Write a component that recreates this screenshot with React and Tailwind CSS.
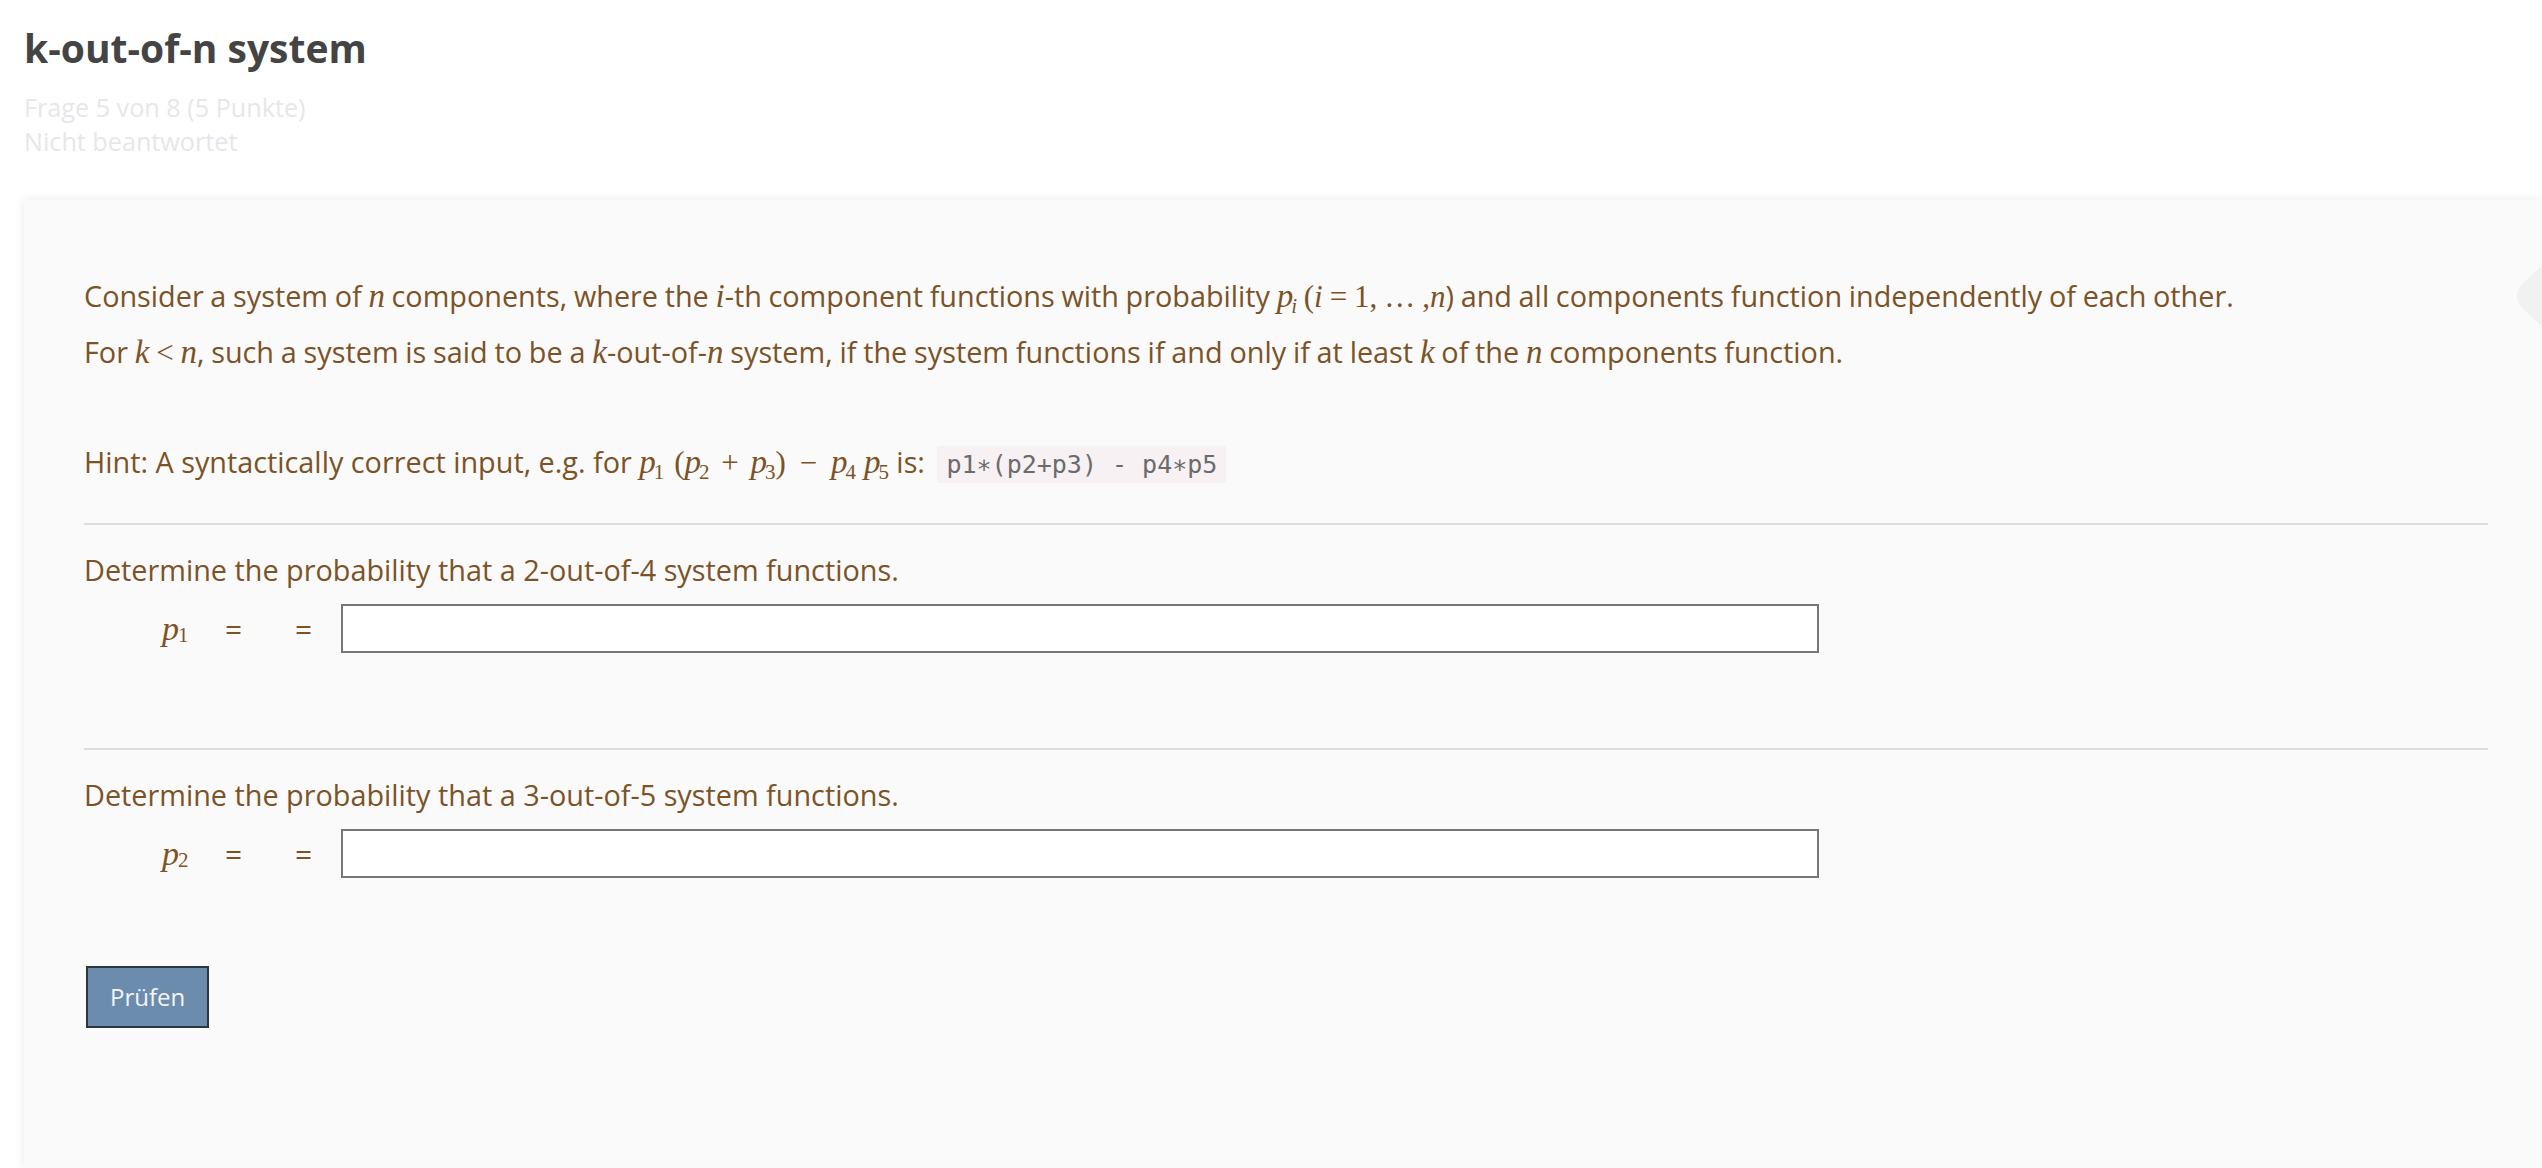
import React from "react";

const M = ({ children, className = "" }) => (
  <span className={"font-['Liberation_Serif',serif] italic text-[31px] leading-none " + className}>{children}</span>
);
const R = ({ children, className = "" }) => (
  <span className={"font-['Liberation_Serif',serif] text-[31px] leading-none " + className}>{children}</span>
);
const Sub = ({ children }) => (
  <span className="font-['Liberation_Serif',serif] not-italic text-[21px] leading-none relative top-[6px] -ml-[2px]">{children}</span>
);
const P = ({ i, className = "" }) => (
  <span className={"whitespace-nowrap " + className}>
    <M className="text-[33px]">p</M>
    <Sub>{i}</Sub>
  </span>
);

function Row({ idx }) {
  return (
    <div className="flex items-center ml-[78px] mt-[14px]">
      <div className="w-[63px] text-[#7b5327] flex items-center">
        <span className="font-['Liberation_Serif',serif] italic text-[34px] leading-none">p</span>
        <span className="font-['Liberation_Serif',serif] text-[21px] leading-none relative top-[7px] -ml-[1px]">{idx}</span>
      </div>
      <div className="w-[70px] text-[30px] text-[#7b5327]">=</div>
      <div className="w-[46px] text-[30px] text-[#7b5327]">=</div>
      <input
        type="text"
        className="w-[1478px] h-[49px] bg-white border-2 border-[#767676] outline-none"
      />
    </div>
  );
}

export default function App() {
  return (
    <div className="h-[1168px] overflow-hidden flex flex-col bg-white font-['Open_Sans',sans-serif]">
      <div className="pl-[24px] pt-[22px]">
        <h1 className="text-[39px] leading-[52px] font-bold text-[#444444]">k-out-of-n system</h1>
        <div className="mt-[16px] text-[25.2px] leading-[34px] text-[#e6e7ea]">
          <div>Frage 5 von 8 (5 Punkte)</div>
          <div>Nicht beantwortet</div>
        </div>
      </div>

      <div className="relative flex-1 mt-[42px] ml-[24px] bg-[#fafafa] shadow-[0_0_10px_rgba(0,0,0,0.09)] pl-[60px] pr-[54px] pt-[76px] text-[#7b5327] text-[28.8px] leading-[40px]">
        <svg className="absolute right-0 top-[56px]" width="34" height="80" viewBox="0 0 34 80">
          <path d="M40 4 L14 28 Q4 40 14 52 L40 76 Z" fill="#f1f1f1" />
        </svg>

        <p className="[word-spacing:-0.8px]">
          Consider a system of <M className="text-[33px]">n</M> components, where the <M className="text-[33px]">i</M>-th component functions with probability{" "}
          <P i={<i className="italic">i</i>} /> <R>(</R><M>i</M>
          <R> = 1, … ,</R>
          <M>n</M>) and all components function independently of each other.
        </p>
        <p className="mt-[16px] [word-spacing:-0.7px]">
          For <M className="text-[33px]">k</M> <R>&lt;</R> <M className="text-[33px]">n</M>, such a system is said to be a <M className="text-[33px]">k</M>-out-of-<M className="text-[33px]">n</M> system, if the
          system functions if and only if at least <M className="text-[33px]">k</M> of the <M className="text-[33px]">n</M> components function.
        </p>

        <p className="mt-[70px]">
          Hint: A syntactically correct input, e.g. for <P i="1" />
          <R className="ml-[10px]">(</R>
          <P i="2" />
          <R className="mx-[4px]"> + </R>
          <P i="3" />
          <R>)</R>
          <R className="mx-[6px]"> − </R>
          <P i="4" />
          <P i="5" className="ml-[8px]" /> is:{" "}
          <span className="inline-block ml-[5px] h-[37px] leading-[37px] px-[9px] bg-[#f7f1f3] text-[#6b6b6b] font-['DejaVu_Sans_Mono',monospace] text-[25px]">
            p1∗(p2+p3) - p4∗p5
          </span>
        </p>

        <div className="mt-[40px] h-[2px] bg-[#dcdcdc]" />
        <p className="mt-[25px]">Determine the probability that a 2-out-of-4 system functions.</p>
        <Row idx="1" />

        <div className="mt-[95px] h-[2px] bg-[#dcdcdc]" />
        <p className="mt-[25px]">Determine the probability that a 3-out-of-5 system functions.</p>
        <Row idx="2" />

        <button className="mt-[88px] ml-[2px] h-[62px] px-[22px] bg-[#6b8cad] border-2 border-[#2c3640] text-[#f3f5f7] text-[24px] leading-none">
          Prüfen
        </button>
      </div>
    </div>
  );
}
